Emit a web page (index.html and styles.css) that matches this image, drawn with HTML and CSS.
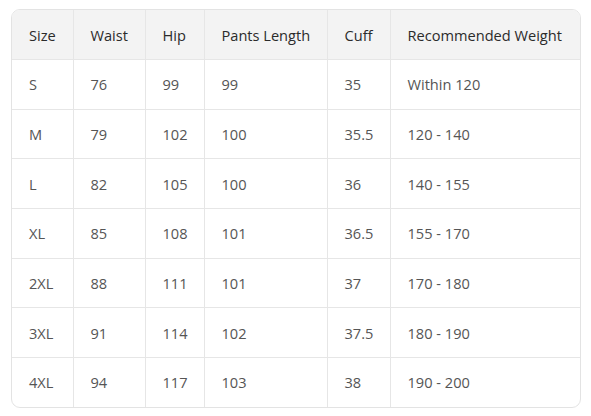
FILE: index.html
```html
<!DOCTYPE html>
<html>
<head>
<meta charset="utf-8">
<link rel="stylesheet" href="styles.css">
</head>
<body>
<div class="wrap">
<table class="size-table">
<colgroup>
<col class="c1"><col class="c2"><col class="c3"><col class="c4"><col class="c5"><col class="c6">
</colgroup>
<thead>
<tr><th>Size</th><th>Waist</th><th>Hip</th><th>Pants Length</th><th>Cuff</th><th>Recommended Weight</th></tr>
</thead>
<tbody>
<tr><td>S</td><td>76</td><td>99</td><td>99</td><td>35</td><td>Within 120</td></tr>
<tr><td>M</td><td>79</td><td>102</td><td>100</td><td>35.5</td><td>120 - 140</td></tr>
<tr><td>L</td><td>82</td><td>105</td><td>100</td><td>36</td><td>140 - 155</td></tr>
<tr><td>XL</td><td>85</td><td>108</td><td>101</td><td>36.5</td><td>155 - 170</td></tr>
<tr><td>2XL</td><td>88</td><td>111</td><td>101</td><td>37</td><td>170 - 180</td></tr>
<tr><td>3XL</td><td>91</td><td>114</td><td>102</td><td>37.5</td><td>180 - 190</td></tr>
<tr><td>4XL</td><td>94</td><td>117</td><td>103</td><td>38</td><td>190 - 200</td></tr>
</tbody>
</table>
</div>
</body>
</html>
```
FILE: styles.css
```css
html, body { margin: 0; padding: 0; background: #fff; }
body { font-family: "Open Sans", "Noto Sans", sans-serif; }
.wrap {
  margin: 9px 0 0 11px;
  width: 570px;
  border: 1px solid #e3e3e3;
  border-radius: 9px;
  overflow: hidden;
  box-sizing: border-box;
}
.size-table {
  width: 100%;
  border-collapse: collapse;
  table-layout: fixed;
  font-size: 14.6px;
}
.c1 { width: 61px; }
.c2 { width: 72px; }
.c3 { width: 59px; }
.c4 { width: 123px; }
.c5 { width: 63px; }
.c6 { width: auto; }
.size-table th, .size-table td {
  text-align: left;
  padding: 0 0 0 17px;
  border-right: 1px solid #e6e6e6;
  border-bottom: 1px solid #e6e6e6;
  white-space: nowrap;
}
.size-table th:last-child, .size-table td:last-child { border-right: none; }
.size-table tbody tr:last-child td { border-bottom: none; }
.size-table th {
  height: 49px;
  background: #f3f3f3;
  color: #2b2b2b;
  font-weight: 400;
}
.size-table td {
  height: 48.7px;
  color: #555;
}
```
